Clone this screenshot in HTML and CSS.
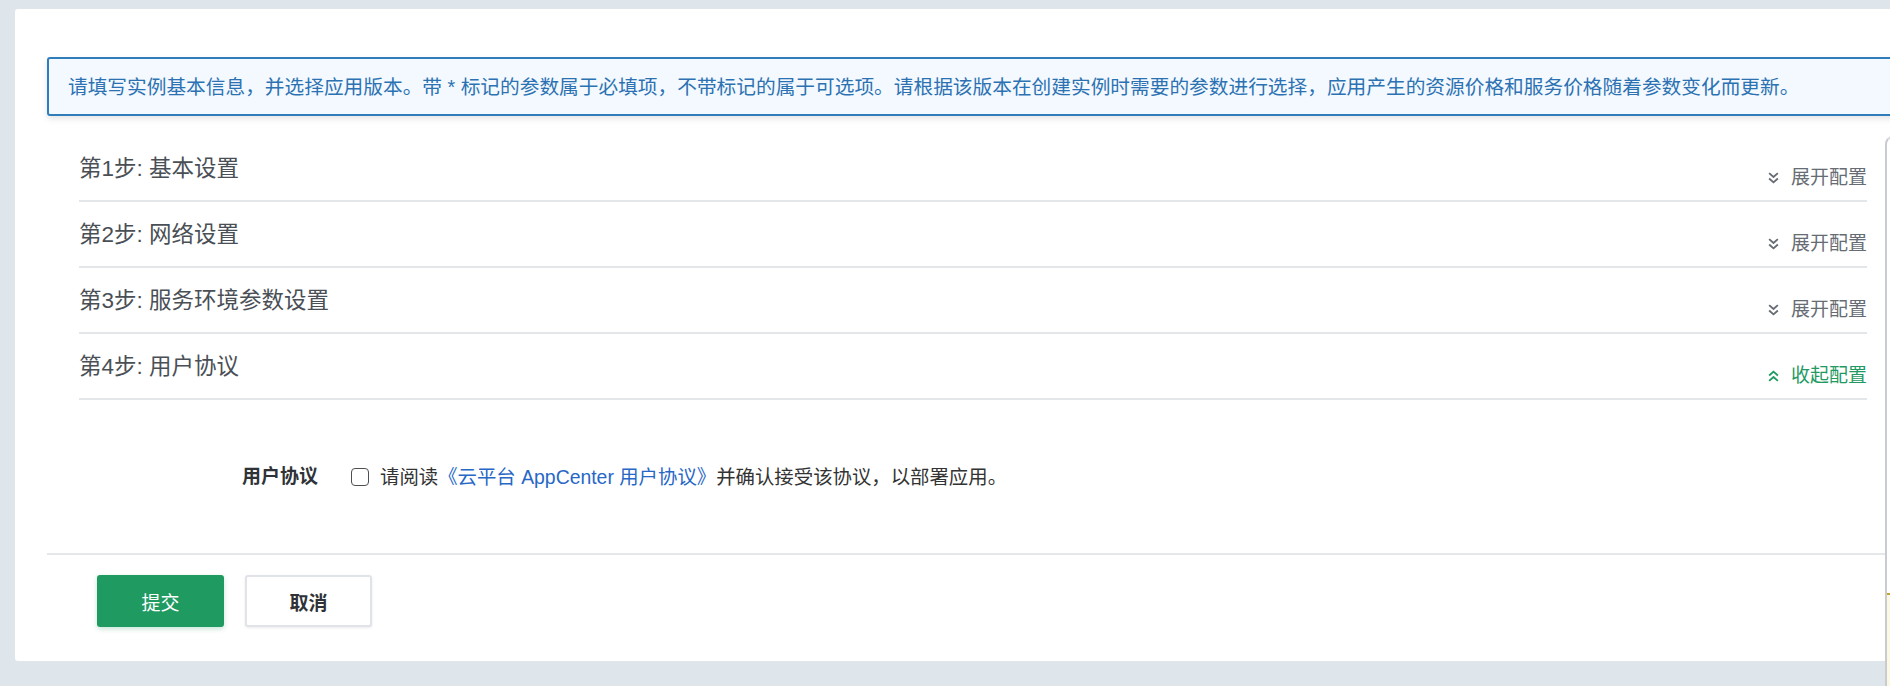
FILE: index.html
```html
<!DOCTYPE html>
<html lang="zh-CN">
<head>
    <meta charset="UTF-8">
    <title>部署应用 - AppCenter</title>
    <link rel="stylesheet" href="styles.css">
</head>
<body>
    <div class="deploy-card">
        <div class="notice">请填写实例基本信息，并选择应用版本。带 * 标记的参数属于必填项，不带标记的属于可选项。请根据该版本在创建实例时需要的参数进行选择，应用产生的资源价格和服务价格随着参数变化而更新。</div>

        <div class="steps">
            <div class="step">
                <span class="step-title">第1步: 基本设置</span>
                <a class="step-toggle">
                    <svg class="toggle-icon" viewBox="0 0 10 11"><polyline points="1,1 5,4.5 9,1"/><polyline points="1,6 5,9.5 9,6"/></svg>
                    展开配置
                </a>
            </div>
            <div class="step">
                <span class="step-title">第2步: 网络设置</span>
                <a class="step-toggle">
                    <svg class="toggle-icon" viewBox="0 0 10 11"><polyline points="1,1 5,4.5 9,1"/><polyline points="1,6 5,9.5 9,6"/></svg>
                    展开配置
                </a>
            </div>
            <div class="step">
                <span class="step-title">第3步: 服务环境参数设置</span>
                <a class="step-toggle">
                    <svg class="toggle-icon" viewBox="0 0 10 11"><polyline points="1,1 5,4.5 9,1"/><polyline points="1,6 5,9.5 9,6"/></svg>
                    展开配置
                </a>
            </div>
            <div class="step">
                <span class="step-title">第4步: 用户协议</span>
                <a class="step-toggle is-open">
                    <svg class="toggle-icon" viewBox="0 0 10 11"><polyline points="1,5 5,1.5 9,5"/><polyline points="1,10 5,6.5 9,10"/></svg>
                    收起配置
                </a>
            </div>
        </div>

        <div class="agreement">
            <span class="field-label">用户协议</span>
            <span class="checkbox"></span>
            <span class="agreement-text">请阅读<a class="link">《云平台 AppCenter 用户协议》</a>并确认接受该协议，以部署应用。</span>
        </div>

        <div class="form-footer">
            <button class="btn btn-primary">提交</button>
            <button class="btn btn-default">取消</button>
        </div>
    </div>

    <!-- price panel, mostly off screen -->
    <div class="side-panel">
        <div class="side-tip"></div>
    </div>
</body>
</html>
```

FILE: styles.css
```css
* {
    margin: 0;
    padding: 0;
    box-sizing: border-box;
}

body {
    width: 1890px;
    height: 686px;
    overflow: hidden;
    background-color: #dee5eb;
    font-family: 'Liberation Sans', 'Noto Sans CJK SC', sans-serif;
    color: #333;
}

.deploy-card {
    width: 1920px;
    height: 652px;
    margin: 9px 0 0 15px;
    padding: 48px 32px 0 32px;
    background: #fff;
    border-radius: 3px;
}

/* Notice */
.notice {
    height: 59px;
    padding: 0 19px;
    line-height: 56px;
    font-size: 19.7px;
    color: #2c72b3;
    white-space: nowrap;
    background: #f3f9fe;
    border: 2px solid #2f7dbb;
    border-radius: 3px;
    box-shadow: 0 3px 6px rgba(0, 0, 0, 0.1);
}

/* Steps */
.steps {
    margin-top: 20px;
    padding: 0 36px 0 32px;
}

.step {
    height: 66px;
    display: flex;
    justify-content: space-between;
    align-items: center;
    border-bottom: 2px solid #e4e7ea;
}

.step-title {
    font-size: 22.5px;
    color: #4a4f56;
    line-height: 30px;
    margin-top: 1px;
}

.step-toggle {
    align-self: flex-end;
    margin-bottom: 11px;
    display: flex;
    align-items: center;
    font-size: 19px;
    line-height: 22px;
    color: #666c73;
    cursor: pointer;
}

.step-toggle.is-open {
    color: #1f9a62;
}

.toggle-icon {
    width: 11px;
    height: 12px;
    margin-right: 12px;
    fill: none;
    stroke: currentColor;
    stroke-width: 1.7;
}

/* Agreement */
.agreement {
    display: flex;
    align-items: center;
    padding: 62px 0 61px 195px;
    line-height: 30px;
}

.field-label {
    font-size: 19px;
    font-weight: bold;
    color: #2f3338;
}

.checkbox {
    width: 18px;
    height: 18px;
    margin: 0 11px 0 33px;
    border: 1.6px solid #4d4f52;
    border-radius: 4px;
}

.agreement-text {
    font-size: 19.4px;
    color: #333;
}

.link {
    color: #2767c6;
    cursor: pointer;
}

/* Footer buttons */
.form-footer {
    display: flex;
    gap: 21px;
    padding: 20px 0 0 50px;
    border-top: 2px solid #e5e8eb;
}

.btn {
    width: 127px;
    height: 52px;
    font-family: inherit;
    font-size: 19px;
    border-radius: 3px;
    cursor: pointer;
}

.btn-primary {
    background: #1f9a61;
    color: #fff;
    border: none;
    box-shadow: 0 2px 5px rgba(31, 154, 97, 0.25);
}

.btn-default {
    background: #fff;
    color: #2f3338;
    font-weight: bold;
    border: 2px solid #e0e3e7;
    box-shadow: 0 1px 3px rgba(0, 0, 0, 0.08);
}

/* Side panel */
.side-panel {
    position: fixed;
    left: 1885px;
    top: 136px;
    width: 40px;
    bottom: 0;
    background: #fff;
    border-left: 2px solid #c8ccd0;
    border-top: 2px solid #d5d8dc;
    border-top-left-radius: 8px;
}

.side-tip {
    margin-top: 455px;
    height: 100px;
    background: #fdf8e2;
    border-top: 2px solid #c9a32c;
}
```
